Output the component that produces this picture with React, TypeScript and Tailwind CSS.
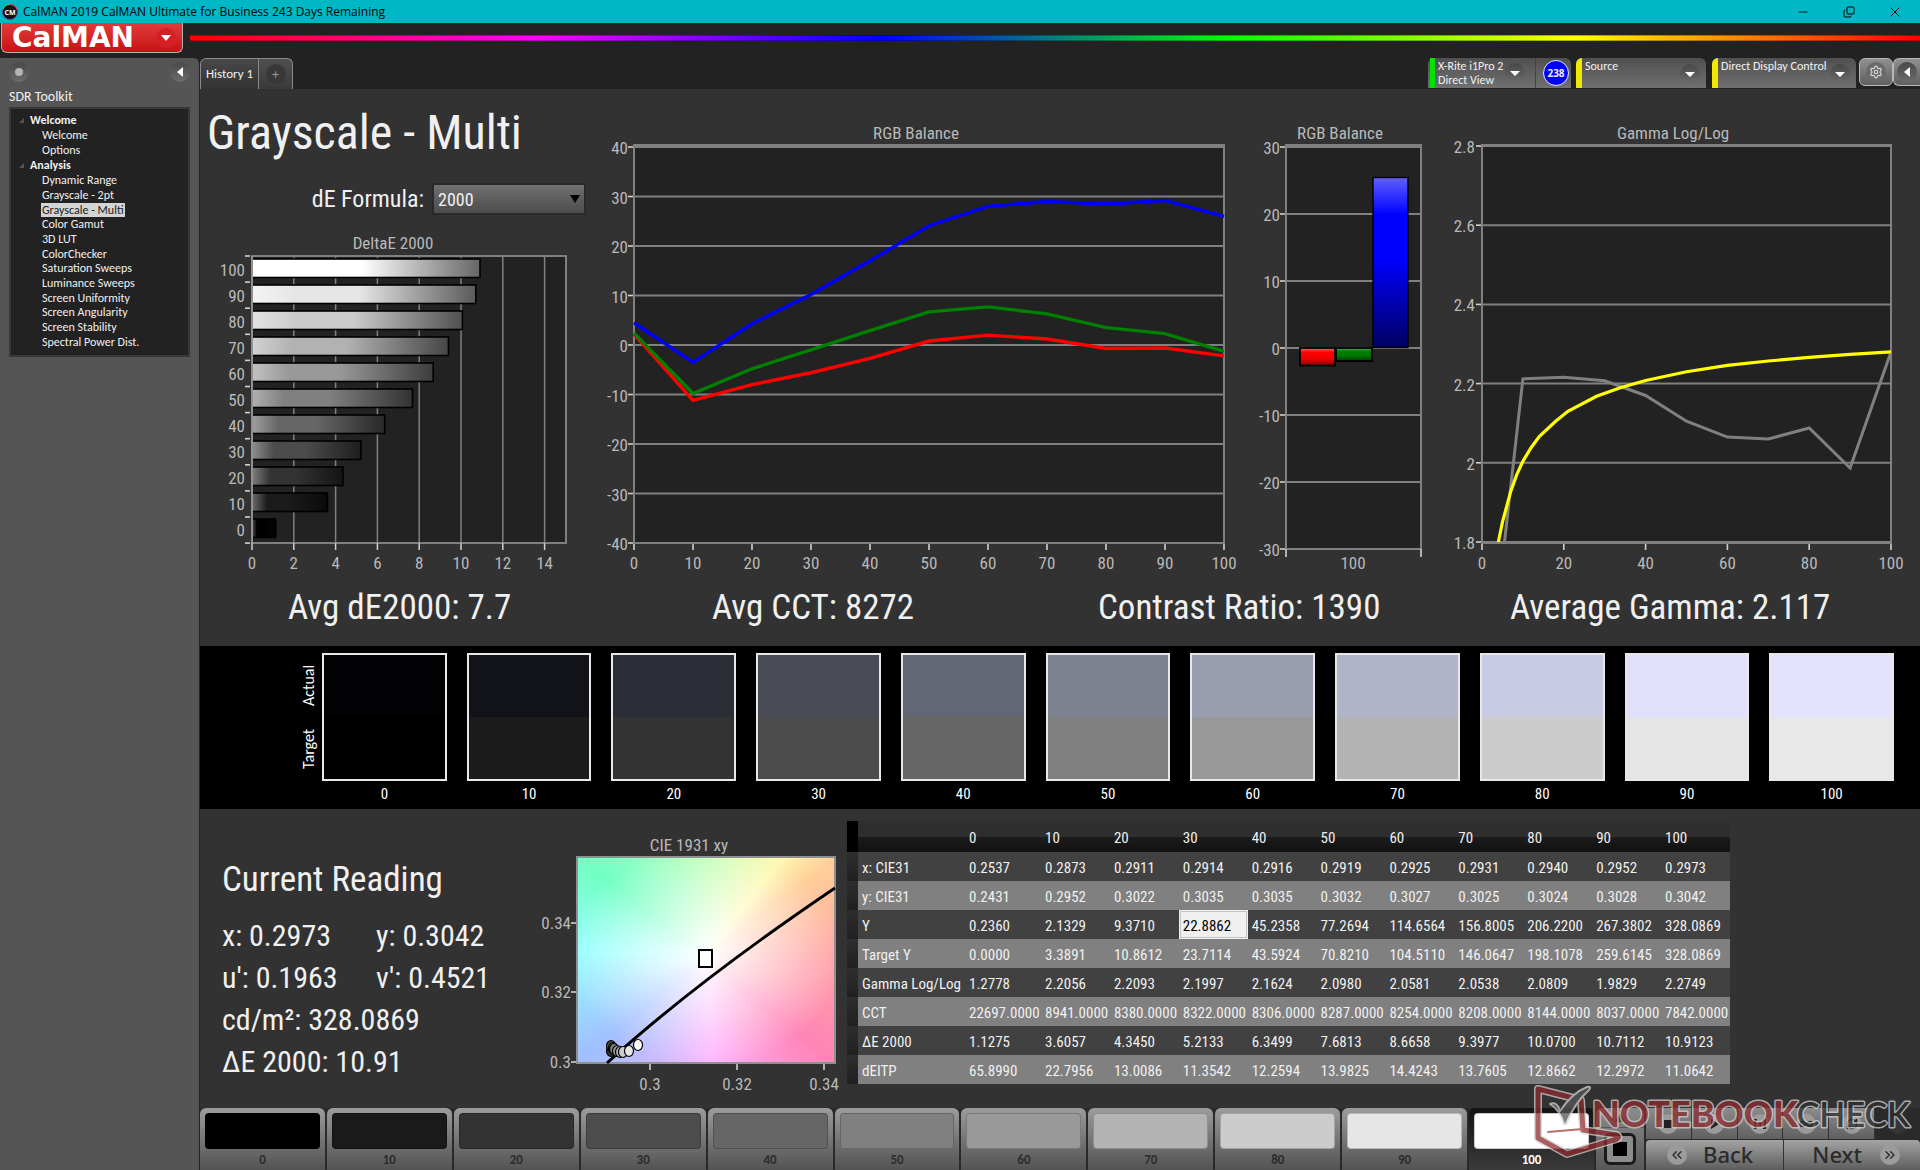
import type { ReactNode } from "react";
import {
  ChevronsLeft,
  ChevronsRight,
  Copy,
  Infinity as InfinityIcon,
  Minus,
  RefreshCw,
  Settings,
  X,
} from "lucide-react";

const levels = [0, 10, 20, 30, 40, 50, 60, 70, 80, 90, 100];

const swatches = [
  { actual: "#020204", target: "#000000" },
  { actual: "#121318", target: "#1b1b1b" },
  { actual: "#2b2e37", target: "#333333" },
  { actual: "#484b54", target: "#4c4c4c" },
  { actual: "#636774", target: "#666666" },
  { actual: "#7c828f", target: "#808080" },
  { actual: "#999db0", target: "#999999" },
  { actual: "#b0b4c9", target: "#b3b3b3" },
  { actual: "#c8cbe3", target: "#cccccc" },
  { actual: "#e0e0fd", target: "#e5e5e5" },
  { actual: "#e4e3ff", target: "#e8e8e8" },
];

const patches = [
  "#000000", "#1a1a1a", "#333333", "#4d4d4d", "#666666", "#808080",
  "#999999", "#b3b3b3", "#cccccc", "#e6e6e6", "#ffffff",
];

const tree = [
  { title: "Welcome", items: ["Welcome", "Options"] },
  {
    title: "Analysis",
    items: [
      "Dynamic Range", "Grayscale - 2pt", "Grayscale - Multi", "Color Gamut",
      "3D LUT", "ColorChecker", "Saturation Sweeps", "Luminance Sweeps",
      "Screen Uniformity", "Screen Angularity", "Screen Stability", "Spectral Power Dist.",
    ],
  },
];

const readings = [
  { label: "x: CIE31", values: ["0.2537", "0.2873", "0.2911", "0.2914", "0.2916", "0.2919", "0.2925", "0.2931", "0.2940", "0.2952", "0.2973"] },
  { label: "y: CIE31", values: ["0.2431", "0.2952", "0.3022", "0.3035", "0.3035", "0.3032", "0.3027", "0.3025", "0.3024", "0.3028", "0.3042"] },
  { label: "Y", values: ["0.2360", "2.1329", "9.3710", "22.8862", "45.2358", "77.2694", "114.6564", "156.8005", "206.2200", "267.3802", "328.0869"] },
  { label: "Target Y", values: ["0.0000", "3.3891", "10.8612", "23.7114", "43.5924", "70.8210", "104.5110", "146.0647", "198.1078", "259.6145", "328.0869"] },
  { label: "Gamma Log/Log", values: ["1.2778", "2.2056", "2.2093", "2.1997", "2.1624", "2.0980", "2.0581", "2.0538", "2.0809", "1.9829", "2.2749"] },
  { label: "CCT", values: ["22697.0000", "8941.0000", "8380.0000", "8322.0000", "8306.0000", "8287.0000", "8254.0000", "8208.0000", "8144.0000", "8037.0000", "7842.0000"] },
  { label: "ΔE 2000", values: ["1.1275", "3.6057", "4.3450", "5.2133", "6.3499", "7.6813", "8.6658", "9.3977", "10.0700", "10.7112", "10.9123"] },
  { label: "dEITP", values: ["65.8990", "22.7956", "13.0086", "11.3542", "12.2594", "13.9825", "14.4243", "13.7605", "12.8662", "12.2972", "11.0642"] },
];

const deltaE = [
  { level: 100, value: 10.91, from: "#ffffff", mid: "#ffffff", to: "#666666" },
  { level: 90, value: 10.71, from: "#f4f4f4", mid: "#e5e5e5", to: "#5a5a5a" },
  { level: 80, value: 10.07, from: "#e2e2e2", mid: "#cccccc", to: "#505050" },
  { level: 70, value: 9.4, from: "#d2d2d2", mid: "#b2b2b2", to: "#464646" },
  { level: 60, value: 8.67, from: "#c2c2c2", mid: "#999999", to: "#3c3c3c" },
  { level: 50, value: 7.68, from: "#b0b0b0", mid: "#808080", to: "#323232" },
  { level: 40, value: 6.35, from: "#a0a0a0", mid: "#666666", to: "#282828" },
  { level: 30, value: 5.21, from: "#8e8e8e", mid: "#4c4c4c", to: "#1e1e1e" },
  { level: 20, value: 4.35, from: "#7e7e7e", mid: "#333333", to: "#141414" },
  { level: 10, value: 3.61, from: "#6c6c6c", mid: "#1b1b1b", to: "#0a0a0a" },
  { level: 0, value: 1.13, from: "#5a5a5a", mid: "#000000", to: "#050505" },
];

const balance = [
  { color: "#ff0000", values: [2.2, -11.2, -8, -5.6, -2.7, 0.8, 2, 1.2, -0.7, -0.6, -2.2] },
  { color: "#008000", values: [2.4, -9.8, -4.8, -1, 2.9, 6.7, 7.7, 6.3, 3.5, 2.3, -1.3] },
  { color: "#0000ff", values: [4.5, -3.5, 4.3, 10.2, 17, 24.1, 28, 29, 28.5, 29.2, 26] },
];

const gammaActual = [
  [5.5, 1.8], [10, 2.212], [20, 2.216], [30, 2.207], [40, 2.17], [50, 2.105],
  [60, 2.065], [70, 2.06], [80, 2.088], [90, 1.987], [100, 2.28],
];

const gammaTarget = [
  [4, 1.8], [5, 1.85], [7, 1.927], [8.5, 1.97], [10, 2.004], [12, 2.038], [14, 2.066],
  [18, 2.105], [21, 2.13], [28, 2.168], [34, 2.19], [40, 2.208], [50, 2.23], [60, 2.246],
  [70, 2.257], [80, 2.266], [90, 2.274], [100, 2.28],
];

const toPoints = (pts: number[][]) => pts.map((p) => p.join(",")).join(" ");

function AxisText({ x, y, anchor = "middle", children }: { x: number; y: number; anchor?: "middle" | "end"; children: ReactNode }) {
  return (
    <text x={x} y={y} textAnchor={anchor} className="fill-[#b9b9b9] text-[17px]">
      {children}
    </text>
  );
}

function ChartTitle({ x, y, children }: { x: number; y: number; children: ReactNode }) {
  return (
    <text x={x} y={y} textAnchor="middle" className="fill-[#b9b9b9] text-[17px]">
      {children}
    </text>
  );
}

function DeltaEChart() {
  const x = (v: number) => 52 + v * 20.9;
  return (
    <svg viewBox="0 0 400 355" className="mt-2.5 block w-full">
      <defs>
        {deltaE.map((b) => (
          <linearGradient key={b.level} id={`de-${b.level}`}>
            <stop offset="0" stopColor={b.from} />
            <stop offset="0.2" stopColor={b.mid} />
            <stop offset="0.48" stopColor={b.mid} />
            <stop offset="1" stopColor={b.to} />
          </linearGradient>
        ))}
      </defs>
      <ChartTitle x={193} y={24}>DeltaE 2000</ChartTitle>
      <rect x={52} y={31} width={314} height={287} fill="#222222" stroke="#808080" strokeWidth={2} />
      {[0, 2, 4, 6, 8, 10, 12, 14].map((v) => (
        <g key={v}>
          <path d={`M${x(v)} 31V318`} stroke="#808080" strokeWidth={1.5} />
          <path d={`M${x(v)} 318V325`} stroke="#d0d0d0" strokeWidth={1.5} />
          <AxisText x={x(v)} y={344}>{v}</AxisText>
        </g>
      ))}
      {deltaE.map((b, i) => (
        <g key={b.level}>
          <rect x={52} y={34 + i * 26} width={b.value * 20.9} height={18.5} fill={`url(#de-${b.level})`} stroke="#000" strokeWidth={1.6} />
          <AxisText x={45} y={51 + i * 26} anchor="end">{b.level}</AxisText>
        </g>
      ))}
      {Array.from({ length: 12 }, (_, i) => (
        <path key={i} d={`M45 ${31 + i * 26.1}h5`} stroke="#d0d0d0" strokeWidth={1.6} />
      ))}
      <path d="M52 31V318" stroke="#909090" strokeWidth={2} />
    </svg>
  );
}

function BalanceChart() {
  const x = (v: number) => 34 + v * 5.9;
  const y = (v: number) => 256 - v * 4.95;
  return (
    <svg viewBox="0 0 640 491" className="block w-full">
      <ChartTitle x={316} y={50}>RGB Balance</ChartTitle>
      <rect x={34} y={56} width={590} height={398} fill="#222222" stroke="#808080" strokeWidth={2} />
      {[40, 30, 20, 10, 0, -10, -20, -30, -40].map((v) => (
        <g key={v}>
          <path d={`M34 ${y(v)}H624`} stroke="#808080" strokeWidth={2} />
          <path d={`M28 ${y(v)}h5`} stroke="#d0d0d0" strokeWidth={1.6} />
          <AxisText x={28} y={y(v) + 7} anchor="end">{v}</AxisText>
        </g>
      ))}
      {levels.map((v) => (
        <g key={v}>
          <path d={`M${x(v)} 455v6`} stroke="#d0d0d0" strokeWidth={1.6} />
          <AxisText x={x(v)} y={480}>{v}</AxisText>
        </g>
      ))}
      {balance.map((s) => (
        <polyline
          key={s.color}
          points={toPoints(s.values.map((v, i) => [x(i * 10), y(v)]))}
          fill="none"
          stroke={s.color}
          strokeWidth={3.4}
        />
      ))}
    </svg>
  );
}

function BalanceBars() {
  const y = (v: number) => 259 - v * 6.7;
  return (
    <svg viewBox="0 0 200 491" className="block w-full">
      <defs>
        <linearGradient id="bar-r" x2="0" y2="1">
          <stop offset="0" stopColor="#ff6a6a" />
          <stop offset="0.25" stopColor="#ff0000" />
          <stop offset="0.6" stopColor="#f00000" />
          <stop offset="1" stopColor="#8a0000" />
        </linearGradient>
        <linearGradient id="bar-g" x2="0" y2="1">
          <stop offset="0" stopColor="#5cb05c" />
          <stop offset="0.25" stopColor="#008000" />
          <stop offset="0.6" stopColor="#007800" />
          <stop offset="1" stopColor="#003c00" />
        </linearGradient>
        <linearGradient id="bar-b" x2="0" y2="1">
          <stop offset="0" stopColor="#6060ff" />
          <stop offset="0.22" stopColor="#0000ff" />
          <stop offset="0.48" stopColor="#0000ff" />
          <stop offset="1" stopColor="#000060" />
        </linearGradient>
      </defs>
      <ChartTitle x={100} y={50}>RGB Balance</ChartTitle>
      <rect x={46} y={56} width={135} height={404} fill="#222222" stroke="#808080" strokeWidth={2} />
      {[30, 20, 10, 0, -10, -20, -30].map((v) => (
        <g key={v}>
          <path d={`M46 ${y(v)}H181`} stroke="#808080" strokeWidth={2} />
          <path d={`M40 ${y(v)}h5`} stroke="#d0d0d0" strokeWidth={1.6} />
          <AxisText x={40} y={y(v) + 7} anchor="end">{v}</AxisText>
        </g>
      ))}
      <path d="M46 460v8M181 460v8" stroke="#d0d0d0" strokeWidth={1.6} />
      <rect x={60} y={259} width={35} height={17.5} fill="url(#bar-r)" stroke="#000" strokeWidth={1.8} />
      <rect x={96} y={259} width={36} height={13} fill="url(#bar-g)" stroke="#000" strokeWidth={1.8} />
      <rect x={133} y={88.5} width={35} height={170} fill="url(#bar-b)" stroke="#000" strokeWidth={1.4} />
      <AxisText x={113} y={480}>100</AxisText>
    </svg>
  );
}

function GammaChart() {
  const x = (v: number) => 42 + v * 4.09;
  const y = (v: number) => 453 - (v - 1.8) * 396;
  return (
    <svg viewBox="0 0 480 491" className="block w-full">
      <ChartTitle x={233} y={50}>Gamma Log/Log</ChartTitle>
      <rect x={42} y={56} width={409} height={398} fill="#222222" stroke="#808080" strokeWidth={2} />
      {[2.8, 2.6, 2.4, 2.2, 2, 1.8].map((v) => (
        <g key={v}>
          <path d={`M42 ${y(v)}H451`} stroke="#808080" strokeWidth={2} />
          <path d={`M36 ${y(v)}h5`} stroke="#d0d0d0" strokeWidth={1.6} />
          <AxisText x={35} y={y(v) + 7} anchor="end">{v}</AxisText>
        </g>
      ))}
      {[0, 20, 40, 60, 80, 100].map((v) => (
        <g key={v}>
          <path d={`M${x(v)} 455v6`} stroke="#d0d0d0" strokeWidth={1.6} />
          <AxisText x={x(v)} y={480}>{v}</AxisText>
        </g>
      ))}
      <polyline points={toPoints(gammaActual.map(([a, b]) => [x(a), y(b)]))} fill="none" stroke="#808080" strokeWidth={3} />
      <polyline points={toPoints(gammaTarget.map(([a, b]) => [x(a), y(b)]))} fill="none" stroke="#ffff00" strokeWidth={3.2} />
    </svg>
  );
}

const ciePoints = [
  { x: 80, y: 222, fill: "#333333" },
  { x: 80, y: 217, fill: "#4c4c4c" },
  { x: 82, y: 219, fill: "#666666" },
  { x: 83, y: 220, fill: "#808080" },
  { x: 86, y: 222, fill: "#999999" },
  { x: 89, y: 223, fill: "#b3b3b3" },
  { x: 92, y: 223, fill: "#cccccc" },
  { x: 98, y: 222, fill: "#e5e5e5" },
  { x: 107, y: 216, fill: "#ffffff" },
];

function CieChart() {
  return (
    <svg viewBox="0 0 316 272" className="block w-[316px] shrink-0">
      <ChartTitle x={158} y={22}>CIE 1931 xy</ChartTitle>
      <foreignObject x={46} y={28} width={258} height={206}>
        <div className="h-full bg-[radial-gradient(ellipse_farthest-corner_at_50%_48%,#fff_0%,rgba(255,255,255,0.5)_38%,transparent_74%),conic-gradient(from_0deg_at_50%_48%,#bfffb8_0deg,#fff8b0_38deg,#ffcf9a_53deg,#ffa4a4_90deg,#ff84b6_130deg,#ffb4ff_176deg,#a0bfff_230deg,#98ffff_272deg,#72ffc4_307deg,#bfffb8_360deg)]" />
      </foreignObject>
      <rect x={46} y={28} width={258} height={206} fill="none" stroke="#909090" strokeWidth={2} />
      {[["0.34", 94], ["0.32", 163], ["0.3", 233]].map(([t, y]) => (
        <g key={t}>
          <path d={`M40 ${y}h5`} stroke="#d0d0d0" strokeWidth={1.6} />
          <AxisText x={40} y={Number(y) + 6} anchor="end">{t}</AxisText>
        </g>
      ))}
      {[["0.3", 119], ["0.32", 206], ["0.34", 293]].map(([t, x]) => (
        <g key={t}>
          <path d={`M${x} 235v6`} stroke="#d0d0d0" strokeWidth={1.6} />
          <AxisText x={Number(x)} y={261}>{t}</AxisText>
        </g>
      ))}
      <path d="M76 234Q165 153 304 59" fill="none" stroke="#000" strokeWidth={3} />
      <rect x={168} y={121} width={13} height={17} fill="#ffffff" stroke="#000" strokeWidth={2} />
      {ciePoints.map((p, i) => (
        <ellipse key={i} cx={p.x} cy={p.y} rx={4.5} ry={5.5} fill={p.fill} stroke="#000" strokeWidth={1.2} />
      ))}
    </svg>
  );
}

function RoundArrow({ dir }: { dir: "down" | "left" }) {
  return (
    <span className="flex size-5 shrink-0 items-center justify-center rounded-full bg-linear-to-b from-[#484848] to-[#6c6c6c]">
      <svg viewBox="0 0 10 10" className="size-2.5 fill-white">
        {dir === "down" ? <path d="M0 3h10L5 8z" /> : <path d="M8 0v10L2 5z" />}
      </svg>
    </span>
  );
}

function TitleBar() {
  return (
    <header className="flex h-[23px] items-center bg-[#00b7c6] font-['Open_Sans',sans-serif] text-[12px] text-black">
      <svg viewBox="0 0 16 16" className="ml-0.5 size-4">
        <circle cx="8" cy="8" r="7.5" fill="#111" stroke="#6b3fa0" />
        <path d="M1 5a7.500 7.500 0 0 1 7-4.500" fill="none" stroke="#3fd04a" />
        <path d="M8 .5a7.500 7.500 0 0 1 7 5" fill="none" stroke="#e04040" />
        <text x="8" y="10.500" textAnchor="middle" className="fill-white text-[7px] font-bold">CM</text>
      </svg>
      <h1 className="ml-[5px] grow">CalMAN 2019 CalMAN Ultimate for Business 243 Days Remaining</h1>
      <div className="mr-0.5 flex h-5 items-center">
        <button type="button" aria-label="Minimize" className="flex w-[46px] justify-center"><Minus className="size-3.5" strokeWidth={1.5} /></button>
        <button type="button" aria-label="Restore" className="flex w-[46px] justify-center"><Copy className="size-3 -scale-x-100 rotate-180" strokeWidth={2} /></button>
        <button type="button" aria-label="Close" className="flex w-[46px] justify-center"><X className="size-4" strokeWidth={1.5} /></button>
      </div>
    </header>
  );
}

function Sidebar() {
  return (
    <aside className="w-[200px] shrink-0 rounded-tr-md border-r border-[#222222] bg-[#555555] text-[#f0f0f0]">
      <div className="flex items-center justify-between px-[9px] pt-1">
        <button type="button" aria-label="Record" className="flex size-5 items-center justify-center rounded-full bg-linear-to-b from-[#484848] to-[#6c6c6c]">
          <span className="size-2 rounded-full bg-[#b4b4b4]" />
        </button>
        <button type="button" aria-label="Collapse panel"><RoundArrow dir="left" /></button>
      </div>
      <h2 className="mt-[5px] pl-[9px] text-[14px] leading-5">SDR Toolkit</h2>
      <nav className="mx-[9px] border-2 border-[#383838] bg-[#222222] pt-[3px] pb-1.5 text-[12px]">
        {tree.map((group) => (
          <section key={group.title}>
            <h3 className="flex h-4 items-center gap-1.5 pl-2 font-bold">
              <svg viewBox="0 0 5 5" className="size-[5px] fill-[#555555]"><path d="M5 0v5H0z" /></svg>
              {group.title}
            </h3>
            <ul className={group.items.length > 2 ? "flex h-[176px] flex-col" : "flex h-[29px] flex-col"}>
              {group.items.map((item) => (
                <li key={item} className="flex flex-1 items-center pl-[30px] leading-[14px]">
                  <a
                    href="#"
                    className={item === "Grayscale - Multi" ? "bg-[#d4d4d4] px-px text-[#222222]" : "px-px"}
                  >
                    {item}
                  </a>
                </li>
              ))}
            </ul>
          </section>
        ))}
      </nav>
    </aside>
  );
}

function TopTabs() {
  return (
    <div className="flex h-[31px] items-start bg-[#222222] text-[#f0f0f0]">
      <div role="tablist" className="flex h-full grow">
        <button type="button" role="tab" aria-selected="true" className="w-[59px] rounded-tl-md border border-b-0 border-[#8a8a8a] bg-linear-to-b from-[#484848] to-[#333333] text-[13px]">
          History 1
        </button>
        <button type="button" aria-label="Add history" className="flex w-[34px] items-center justify-center rounded-tr-md border border-b-0 border-l-0 border-[#8a8a8a] bg-linear-to-b from-[#505050] to-[#3a3a3a]">
          <span className="flex size-5 items-center justify-center rounded-full bg-[#383838] text-[14px] text-[#999999]">+</span>
        </button>
      </div>
      <div className="flex h-[30px] text-[12px] leading-[14px]">
        <button type="button" className="flex w-[108px] items-center rounded-tl-md border-r border-[#444444] bg-linear-to-b from-[#505050] to-[#707070] pl-0.5 text-left">
          <span className="h-full w-[5px] bg-[#00e400]" />
          <span className="ml-[3px] grow">X-Rite i1Pro 2<br />Direct View</span>
          <span className="mr-2.5"><RoundArrow dir="down" /></span>
        </button>
        <div className="mr-[5px] flex w-[35px] items-center justify-end rounded-tr-md bg-linear-to-b from-[#505050] to-[#707070] pr-0.5">
          <span className="flex size-[26px] items-center justify-center rounded-full border border-[#e8e8ff] bg-[#0000ff] font-['Open_Sans',sans-serif] text-[10px] font-bold">238</span>
        </div>
        <button type="button" className="mr-[6px] flex w-[130px] items-start rounded-t-md bg-linear-to-b from-[#505050] to-[#707070] text-left">
          <span className="h-full w-[6px] rounded-tl-md bg-[#f0e800]" />
          <span className="mt-px ml-[3px] grow">Source</span>
          <span className="mt-[6px] mr-[6px]"><RoundArrow dir="down" /></span>
        </button>
        <button type="button" className="mr-[3px] flex w-[144px] items-start rounded-t-md bg-linear-to-b from-[#505050] to-[#707070] text-left">
          <span className="h-full w-[6px] rounded-tl-md bg-[#f0e800]" />
          <span className="mt-px ml-[3px] grow whitespace-nowrap">Direct Display Control</span>
          <span className="mt-[6px] mr-[6px]"><RoundArrow dir="down" /></span>
        </button>
        <button type="button" aria-label="Settings" className="flex h-7 w-[34px] items-center justify-center rounded-md border border-[#b8b8b8] bg-linear-to-b from-[#909090] to-[#606060]">
          <span className="flex size-5 items-center justify-center rounded-full bg-[#6a6a6a]"><Settings className="size-3.5 text-[#d8d8d8]" /></span>
        </button>
        <button type="button" aria-label="Show panel" className="flex h-7 w-[27px] items-center justify-center rounded-l-md border border-r-0 border-[#b8b8b8] bg-linear-to-b from-[#909090] to-[#606060]">
          <RoundArrow dir="left" />
        </button>
      </div>
    </div>
  );
}

function Charts() {
  return (
    <section className="pb-3.5 font-['Roboto_Condensed','Roboto',sans-serif] text-[#f0f0f0]">
      <div className="grid grid-cols-[400fr_640fr_200fr_480fr]">
        <div>
          <h2 className="mt-3 pl-[7px] text-[48px] leading-[64px]">Grayscale - Multi</h2>
          <div className="mt-[18px] flex h-8 items-center justify-end gap-2 pr-3.5 text-[24px]">
            <label htmlFor="formula">dE Formula:</label>
            <div className="relative h-8 w-[154px]">
              <select id="formula" className="block h-full w-full appearance-none border-2 border-[#2a2a2a] bg-linear-to-b from-[#707070] to-[#4c4c4c] pl-1 text-[18px]">
                <option>2000</option>
              </select>
              <svg viewBox="0 0 10 8" className="pointer-events-none absolute top-3 right-1.5 h-2 w-2.5 fill-black"><path d="M0 0h10L5 8z" /></svg>
            </div>
          </div>
          <DeltaEChart />
        </div>
        <BalanceChart />
        <BalanceBars />
        <GammaChart />
      </div>
      <div className="grid grid-cols-[424fr_386fr_412fr_410fr] pt-1 pl-[88px] text-[35px] leading-[48px] whitespace-nowrap">
        <p>Avg dE2000: 7.7</p>
        <p>Avg CCT: 8272</p>
        <p>Contrast Ratio: 1390</p>
        <p>Average Gamma: 2.117</p>
      </div>
    </section>
  );
}

function SwatchStrip() {
  return (
    <section className="flex h-[163px] bg-black pt-[7px] pr-[26px] pl-[96px] text-white">
      <div className="flex h-32 w-[26px] rotate-180 text-[16px] leading-[26px] font-medium [writing-mode:vertical-rl]">
        <span className="flex flex-1 items-center justify-center">Target</span>
        <span className="flex flex-1 items-center justify-center">Actual</span>
      </div>
      <div className="grid grow grid-cols-11 gap-5">
        {swatches.map((s, i) => (
          <figure key={levels[i]}>
            <div className="flex h-32 flex-col border-2 border-[#e8e8e8]">
              <div className="flex-1" style={{ backgroundColor: s.actual }} />
              <div className="flex-1" style={{ backgroundColor: s.target }} />
            </div>
            <figcaption className="text-center font-['Roboto_Condensed','Roboto',sans-serif] text-[15px] leading-[26px]">{levels[i]}</figcaption>
          </figure>
        ))}
      </div>
    </section>
  );
}

function ReadingsTable() {
  return (
    <table className="w-[883px] table-fixed border-collapse self-start text-left text-[15px] text-[#f0f0f0]">
      <colgroup>
        <col className="w-[11px]" />
        <col className="w-[107px]" />
        <col className="w-[76px]" />
        {levels.slice(1).map((l) => <col key={l} />)}
      </colgroup>
      <thead>
        <tr className="h-[31px] bg-[linear-gradient(#2e2e2e_50%,#1c1c1c_50%,#111111)]">
          <td className="bg-black" />
          <td />
          {levels.map((l) => (
            <th key={l} scope="col" className="pt-1 pl-1 text-[15px] font-normal">{l}</th>
          ))}
        </tr>
      </thead>
      <tbody>
        {readings.map((row) => (
          <tr key={row.label} className="h-[29px] odd:bg-[#414141] even:bg-[#808080]">
            <td className="bg-linear-to-b from-[#2e2e2e] to-[#202020]" />
            <th scope="row" className="pt-[3px] pl-1 font-normal whitespace-nowrap">{row.label}</th>
            {row.values.map((v, i) => (
              <td
                key={levels[i]}
                className={v === "22.8862" ? "bg-[#f0f0f0] pt-[3px] pl-1 text-black outline-1 -outline-offset-2 outline-[#c4c4c4]" : "pt-[3px] pl-1"}
              >
                {v}
              </td>
            ))}
          </tr>
        ))}
      </tbody>
    </table>
  );
}

function Details() {
  return (
    <section className="flex h-[299px] pt-3 font-['Roboto_Condensed','Roboto',sans-serif]">
      <div className="w-[331px] shrink-0 pt-9 pl-[22px] text-[#f0f0f0]">
        <h2 className="text-[35px] leading-[46px]">Current Reading</h2>
        <div className="mt-3 grid grid-cols-[154px_1fr] text-[30px] leading-[42px] whitespace-nowrap">
          <span>x: 0.2973</span>
          <span>y: 0.3042</span>
          <span>u': 0.1963</span>
          <span>v': 0.4521</span>
          <span className="col-span-2">cd/m²: 328.0869</span>
          <span className="col-span-2">ΔE 2000: 10.91</span>
        </div>
      </div>
      <div className="pt-2"><CieChart /></div>
      <ReadingsTable />
    </section>
  );
}

function ToolButton({ label, children }: { label: string; children: ReactNode }) {
  return (
    <button type="button" aria-label={label} className="flex flex-1 items-center justify-center border-r border-[#333333] bg-linear-to-b from-[#8c8c8c] to-[#606060]">
      <span className="flex size-5 items-center justify-center rounded-full bg-[#9a9a9a] text-[#222222]">{children}</span>
    </button>
  );
}

function BottomBar() {
  return (
    <footer className="relative flex h-[62px] bg-[#2a2a2a]">
      <div className="grid grow grid-cols-11 gap-0.5">
        {patches.map((color, i) => {
          const active = i === 10;
          return (
            <button
              key={color}
              type="button"
              className={
                active
                  ? "flex flex-col rounded-t-md bg-linear-to-b from-[#141414] to-[#3c3c3c] px-[5px] pt-[5px] text-[13px] leading-[22px] font-bold text-white"
                  : "flex flex-col rounded-t-md bg-linear-to-b from-[#9c9c9c] to-[#525252] px-[5px] pt-[5px] text-[13px] leading-[22px] font-bold text-[#2c2c2c]"
              }
            >
              <span className="h-9 w-full rounded border border-black/20" style={{ backgroundColor: color }} />
              <span className="w-full text-center">{levels[i]}</span>
            </button>
          );
        })}
      </div>
      <div className="ml-0.5 flex w-12 flex-col rounded-t-md bg-linear-to-b from-[#8c8c8c] to-[#585858]">
        <button type="button" aria-label="Previous patch" className="flex h-5 items-center justify-center border-b border-[#555555]">
          <svg viewBox="0 0 12 8" className="h-2 w-3 fill-[#444444]"><path d="M6 0l6 8H0z" /></svg>
        </button>
        <button type="button" aria-label="Current patch" className="m-auto flex size-8 items-center justify-center rounded-md border-3 border-[#1a1a1a] bg-[#8c8c8c]">
          <span className="size-3.5 bg-black" />
        </button>
      </div>
      <div className="ml-0.5 flex w-[274px] flex-col gap-px">
        <div className="flex h-[31px]">
          <ToolButton label="Stop"><span className="size-2 bg-[#222222]" /></ToolButton>
          <ToolButton label="Play"><svg viewBox="0 0 10 10" className="size-2.5 fill-[#222222]"><path d="M2 0l8 5-8 5z" /></svg></ToolButton>
          <ToolButton label="Read series"><svg viewBox="0 0 12 10" className="h-2.5 w-3 fill-[#222222]"><path d="M0 0h3v2H2v6h1v2H0zM12 0H9v2h1v6H9v2h3zM4 5l2-2v4zM8 5L6 3v4z" /></svg></ToolButton>
          <ToolButton label="Read continuous"><InfinityIcon className="size-3.5" strokeWidth={3} /></ToolButton>
          <ToolButton label="Refresh"><RefreshCw className="size-3" strokeWidth={3} /></ToolButton>
          <div className="flex flex-1 items-center justify-center rounded-tr-md bg-[#2a2a2a]">
            <span className="size-5 rounded-full bg-[#353535]" />
          </div>
        </div>
        <div className="flex h-[30px] font-['Noto_Sans',sans-serif] text-[22px] leading-[28px] font-medium text-[#2b2b2b]">
          <button type="button" className="flex flex-1 items-center gap-4 rounded-tl border-r border-[#333333] bg-linear-to-b from-[#a4a4a4] to-[#5e5e5e] pl-[21px]">
            <span className="flex size-5 items-center justify-center rounded-full bg-[#9c9c9c]"><ChevronsLeft className="size-4" /></span>
            <span className="-mt-0.5">Back</span>
          </button>
          <button type="button" className="flex flex-1 items-center justify-end gap-[18px] rounded-tr bg-linear-to-b from-[#a4a4a4] to-[#5e5e5e] pr-5">
            <span className="-mt-0.5">Next</span>
            <span className="flex size-5 items-center justify-center rounded-full bg-[#9c9c9c]"><ChevronsRight className="size-4" /></span>
          </button>
        </div>
      </div>
      <Watermark />
    </footer>
  );
}

function Watermark() {
  return (
    <svg viewBox="0 0 390 80" className="pointer-events-none absolute right-0 bottom-3 h-20 w-[390px] opacity-75" aria-label="Notebookcheck">
      <g strokeLinejoin="round" strokeLinecap="round">
        <path d="M8 11L51 22L53 52L87 57Q90 59 87 61L37 76L8 60Z" fill="none" stroke="#d0d0d0" strokeWidth={8} />
        <path d="M8 11L51 22L53 52L87 57Q90 59 87 61L37 76L8 60Z" fill="none" stroke="#8e2c30" strokeWidth={5} />
        <path d="M18 54L53 51" stroke="#a83c3c" strokeWidth={2} />
        <path d="M20 26Q27 23 30 33Q42 15 57 9Q62 8 59 12Q45 24 36 46L34 46Q30 32 20 26Z" fill="#555555" stroke="#d0d0d0" strokeWidth={2} />
      </g>
      <g className="font-['Lato',sans-serif]" stroke="#d0d0d0" paintOrder="stroke" strokeLinejoin="round">
        <text x={62} y={49} strokeWidth={3} className="fill-[#8e2c30] text-[36px] font-black">NOTEBOOK</text>
        <text x={380} y={49} textAnchor="end" strokeWidth={3} className="fill-[#2e2e2e] text-[34px] font-semibold">CHECK</text>
      </g>
    </svg>
  );
}

export default function App() {
  return (
    <div className="flex min-h-screen flex-col overflow-hidden bg-[#222222] font-['Carlito','Lato',sans-serif]">
      <TitleBar />
      {/* Brand button and spectrum line */}
      <div className="flex h-[35px] items-start">
        <button type="button" className="ml-px flex h-[30px] w-[182px] items-center justify-between rounded-b-md border border-t-0 border-[#b0b0b0] bg-linear-to-b from-[#e03a3a] to-[#c80c10] pr-1.5 pl-2.5 text-white">
          <span className="font-['DejaVu_Sans',sans-serif] text-[28px] leading-[28px] font-bold">CalMAN</span>
          <span className="flex size-5 items-center justify-center rounded-full bg-[#d42024]">
            <svg viewBox="0 0 10 6" className="h-1.5 w-2.5 fill-white"><path d="M0 0h10L5 6z" /></svg>
          </span>
        </button>
        <div className="mt-3 ml-[7px] h-1.5 grow border-y border-black/30 bg-[linear-gradient(90deg,#ff0000,#ff00ff_20%,#0000ff_40%,#00ff00_60%,#ffff00_80%,#ff0000)]" />
      </div>
      <div className="flex grow">
        <Sidebar />
        <main className="min-w-0 grow bg-[#323232]">
          <TopTabs />
          <Charts />
          <SwatchStrip />
          <Details />
          <BottomBar />
        </main>
      </div>
    </div>
  );
}
